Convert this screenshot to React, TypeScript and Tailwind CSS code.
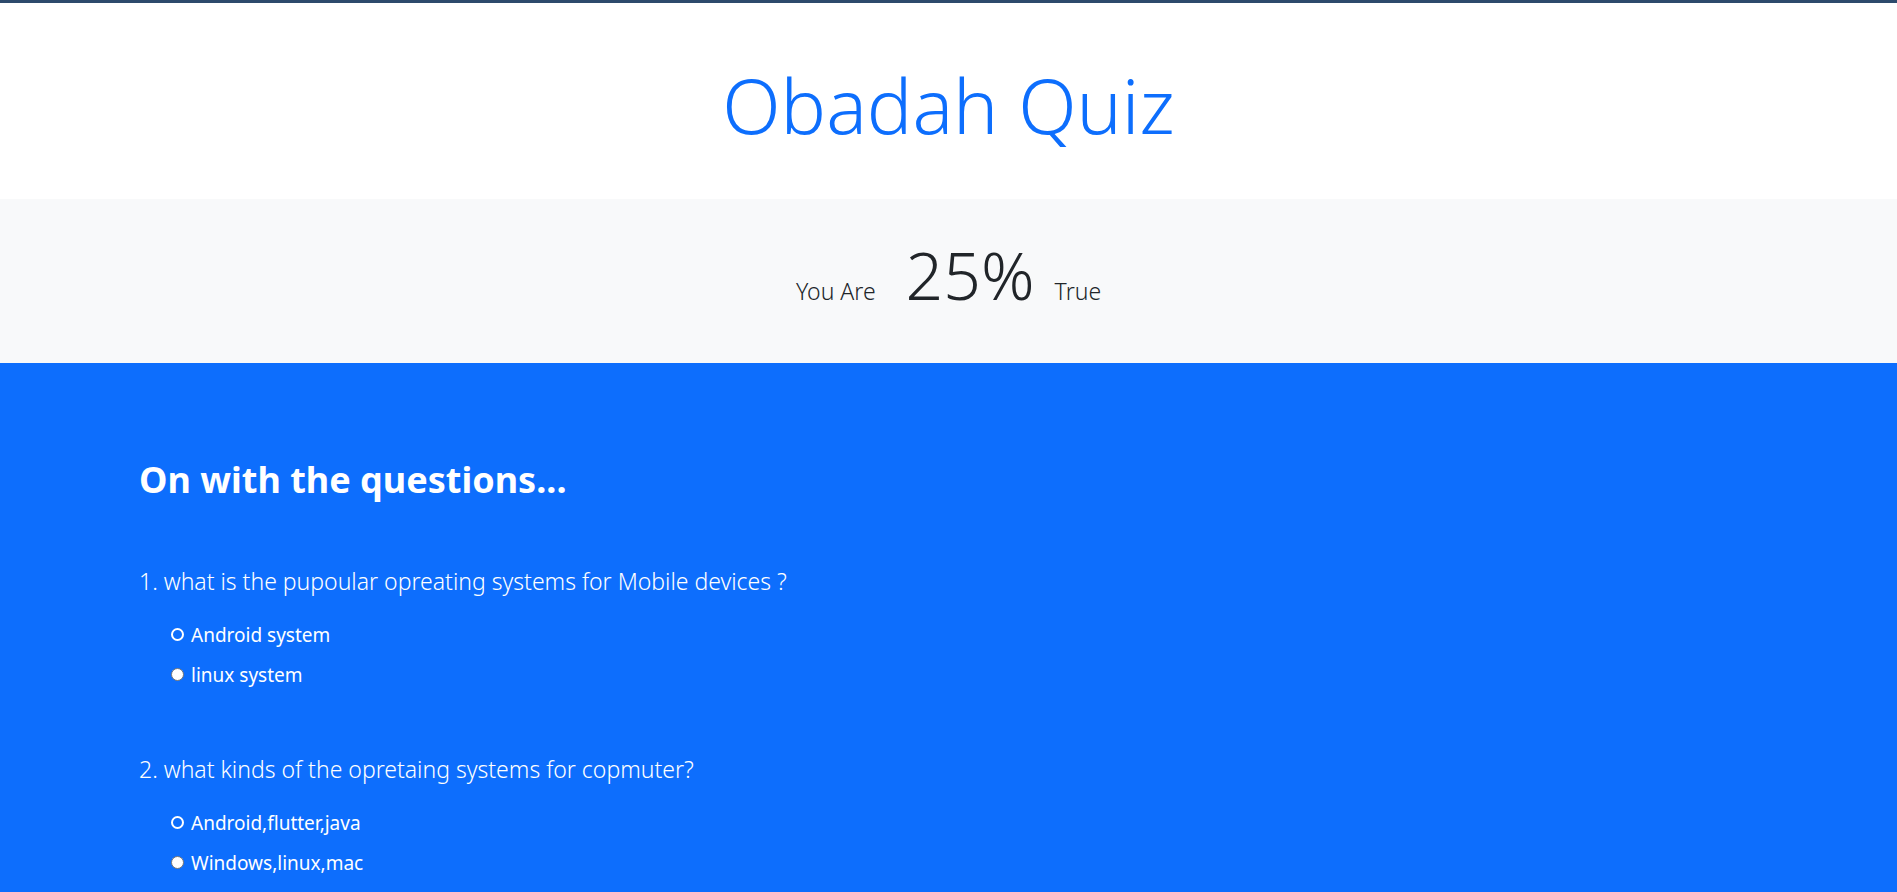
import React from "react";

type Question = {
  text: string;
  options: string[];
};

const questions: Question[] = [
  {
    text: "1. what is the pupoular opreating systems for Mobile devices ?",
    options: ["Android system", "linux system"],
  },
  {
    text: "2. what kinds of the opretaing systems for copmuter?",
    options: ["Android,flutter,java", "Windows,linux,mac"],
  },
];

function Radio({ first }: { first: boolean }) {
  return first ? (
    <span className="block h-[13px] w-[13px] shrink-0 rounded-full border-2 border-white" />
  ) : (
    <span className="block h-[13px] w-[13px] shrink-0 rounded-full border border-[#767676] bg-white" />
  );
}

export default function App() {
  return (
    <div className="min-h-screen bg-[#0d6efd] font-['Noto_Sans','Open_Sans',sans-serif]">
      <div className="h-[3px] bg-[#2d4a6c]" />

      <header className="flex h-[196px] justify-center bg-white pt-[64px]">
        <h1 className="text-[76px] font-light leading-none text-[#0d6efd]">Obadah Quiz</h1>
      </header>

      <section className="flex h-[164px] justify-center bg-[#f8f9fa] pt-[42px] text-[#212529]">
        <div className="flex items-baseline self-start">
          <span className="text-[23px] font-light">You Are</span>
          <span className="ml-[30px] mr-[20px] text-[66px] font-light leading-none">25%</span>
          <span className="text-[23px] font-light">True</span>
        </div>
      </section>

      <main className="pb-10 pl-[139px] pt-[94px] text-white">
        <h2 className="text-[36px] font-bold leading-tight">On with the questions...</h2>

        <div className="mt-[65px] space-y-[66px]">
          {questions.map((q) => (
            <div key={q.text}>
              <p className="text-[23px] font-light leading-tight">{q.text}</p>
              <ul className="mt-[25px] space-y-[12px] pl-[32px]">
                {q.options.map((opt, i) => (
                  <li key={opt} className="flex items-center gap-[7px] text-[19px] leading-[28px]">
                    <Radio first={i === 0} />
                    <span>{opt}</span>
                  </li>
                ))}
              </ul>
            </div>
          ))}
        </div>
      </main>
    </div>
  );
}
